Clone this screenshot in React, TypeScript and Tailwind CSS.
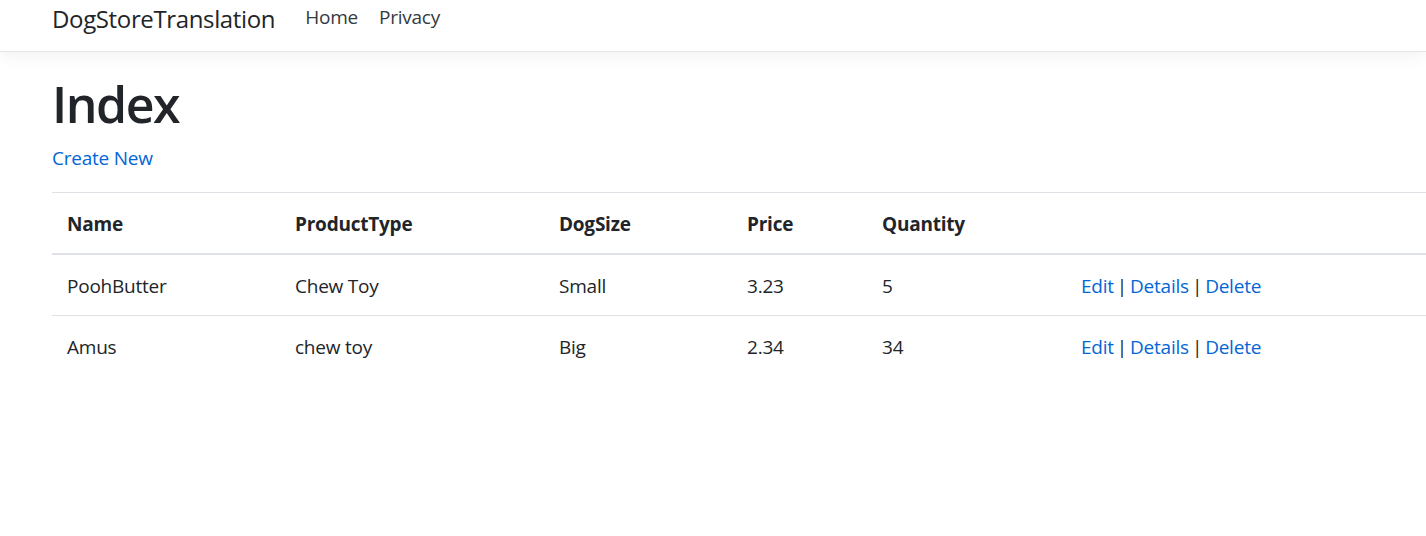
import React from "react";

const rows = [
  { name: "PoohButter", type: "Chew Toy", size: "Small", price: "3.23", qty: "5" },
  { name: "Amus", type: "chew toy", size: "Big", price: "2.34", qty: "34" },
];

function Actions() {
  return (
    <span>
      <a className="text-[#0366d6]" href="#">Edit</a>
      <span className="mx-[3px]">|</span>
      <a className="text-[#0366d6]" href="#">Details</a>
      <span className="mx-[3px]">|</span>
      <a className="text-[#0366d6]" href="#">Delete</a>
    </span>
  );
}

const th = "px-[15px] pt-[16px] pb-[14px] border-t border-b-2 border-[#dee2e6] font-bold";
const td = "px-[15px] pt-[16px] pb-[14px] border-t border-[#dee2e6]";

export default function App() {
  return (
    <div
      className="min-h-[536px] w-[1426px] overflow-hidden bg-white text-[#212529] text-[19px] leading-[30px] tracking-[-0.012em]"
      style={{ fontFamily: '"Open Sans", "Noto Sans", sans-serif' }}
    >
      <nav className="h-[52px] border-b border-[#e5e5e5] shadow-[0_5px_15px_rgba(0,0,0,0.05)] pl-[52px] flex items-start">
        <a href="#" className="text-[24px] leading-[37px] tracking-[-0.015em] text-[#212529] mr-[30px]">DogStoreTranslation</a>
        <a href="#" className="mt-[2px] text-[#343a40] mr-[21px]">Home</a>
        <a href="#" className="mt-[2px] text-[#343a40]">Privacy</a>
      </nav>
      <main className="pl-[52px] pt-[22px]">
        <h1 className="text-[50px] leading-[60px] font-semibold tracking-[-0.03em] mb-[9px]">Index</h1>
        <p className="mb-[19px]">
          <a href="#" className="text-[#0366d6]">Create New</a>
        </p>
        <table className="w-full border-collapse text-left">
          <colgroup>
            <col className="w-[228px]" />
            <col className="w-[264px]" />
            <col className="w-[188px]" />
            <col className="w-[135px]" />
            <col className="w-[199px]" />
            <col />
          </colgroup>
          <thead>
            <tr>
              <th className={th}>Name</th>
              <th className={th}>ProductType</th>
              <th className={th}>DogSize</th>
              <th className={th}>Price</th>
              <th className={th}>Quantity</th>
              <th className={th}></th>
            </tr>
          </thead>
          <tbody>
            {rows.map((r) => (
              <tr key={r.name}>
                <td className={td}>{r.name}</td>
                <td className={td}>{r.type}</td>
                <td className={td}>{r.size}</td>
                <td className={td}>{r.price}</td>
                <td className={td}>{r.qty}</td>
                <td className={td}><Actions /></td>
              </tr>
            ))}
          </tbody>
        </table>
      </main>
    </div>
  );
}
